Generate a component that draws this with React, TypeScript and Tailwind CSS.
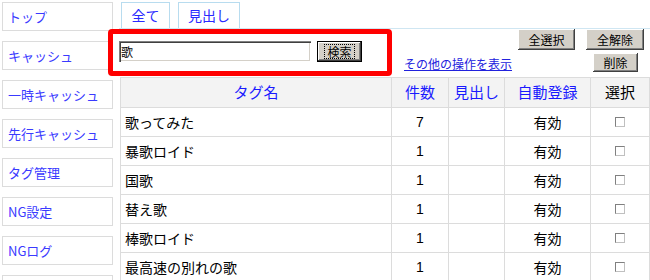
import React from "react";

const side = ["トップ", "キャッシュ", "一時キャッシュ", "先行キャッシュ", "タグ管理", "NG設定", "NGログ", ""];
const rows = [
  ["歌ってみた", "7"],
  ["暴歌ロイド", "1"],
  ["国歌", "1"],
  ["替え歌", "1"],
  ["棒歌ロイド", "1"],
  ["最高速の別れの歌", "1"],
];

const font = { fontFamily: '"Noto Sans CJK JP", "Liberation Sans", sans-serif' };

function WinButton({ children, className = "" }: { children: React.ReactNode; className?: string }) {
  return (
    <div
      className={
        "flex items-center justify-center bg-[#d4d0c8] text-[12px] leading-none text-black shadow-[inset_-1px_-1px_#404040,inset_1px_1px_#ffffff,inset_-2px_-2px_#808080] " +
        className
      }
    >
      {children}
    </div>
  );
}

export default function App() {
  return (
    <div className="relative h-[280px] w-[650px] overflow-hidden bg-white" style={font}>
      <div className="flex pl-[2px] pt-[2px]">
        <div className="flex w-[111px] flex-col gap-[10px]">
          {side.map((s, i) => (
            <div
              key={i}
              className="flex h-[29px] items-center border border-[#dcdcdc] pl-[5px] text-[13px] text-[#3a3aff]"
            >
              {s}
            </div>
          ))}
        </div>
        <div className="ml-[6px] flex w-[531px] flex-col">
          <div className="flex h-[27px] gap-[8px] border-b border-[#cfe6f2] pl-[2px]">
            <div className="flex h-[26px] w-[49px] items-center justify-center border border-b-0 border-[#b8dcef] text-[14px] text-[#2a2aff]">
              全て
            </div>
            <div className="flex h-[26px] w-[62px] items-center justify-center border border-b-0 border-[#b8dcef] text-[14px] text-[#2a2aff]">
              見出し
            </div>
          </div>
          <div className="flex h-[48px] items-start">
            <div className="mt-[12px] flex h-[21px] w-[192px] items-center bg-white pl-[2px] text-[12px] text-black shadow-[inset_1px_1px_#808080,inset_2px_2px_#404040,inset_-1px_-1px_#ffffff,inset_-2px_-2px_#d4d0c8]">
              歌
            </div>
            <div className="ml-[6px] mt-[12px] flex h-[21px] w-[45px] items-center justify-center border border-black bg-[#d4d0c8] shadow-[inset_-1px_-1px_#404040,inset_1px_1px_#ffffff,inset_-2px_-2px_#808080]">
              <span className="border border-dotted border-black px-[2px] text-[12px] leading-[13px] text-black">検索</span>
            </div>
            <div className="ml-[42px] mt-[28px] text-[12px] leading-[14px] text-[#2222dd] underline">
              その他の操作を表示
            </div>
            <div className="ml-[6px] flex flex-col">
              <div className="flex gap-[11px]">
                <WinButton className="h-[21px] w-[57px]">全選択</WinButton>
                <WinButton className="h-[21px] w-[58px]">全解除</WinButton>
              </div>
              <div className="mt-[3px] flex">
                <WinButton className="ml-[75px] h-[19px] w-[45px]">削除</WinButton>
              </div>
            </div>
          </div>
          <table className="ml-[1px] w-[529px] table-fixed border-collapse">
            <colgroup>
              <col className="w-[271px]" />
              <col className="w-[57px]" />
              <col className="w-[56px]" />
              <col className="w-[86px]" />
              <col className="w-[59px]" />
            </colgroup>
            <thead>
              <tr className="h-[30px] bg-[#f3f3f3] text-[15px]">
                <th className="border border-[#dcdcdc] font-normal text-[#1a1aff]">タグ名</th>
                <th className="border border-[#dcdcdc] font-normal text-[#1a1aff]">件数</th>
                <th className="border border-[#dcdcdc] font-normal text-[#1a1aff]">見出し</th>
                <th className="border border-[#dcdcdc] font-normal text-[#1a1aff]">自動登録</th>
                <th className="border border-[#dcdcdc] font-normal text-black">選択</th>
              </tr>
            </thead>
            <tbody>
              {rows.map(([n, c], i) => (
                <tr key={i} className="h-[29px] text-[14px] text-black">
                  <td className="border border-[#dcdcdc] pl-[4px]">{n}</td>
                  <td className="border border-[#dcdcdc] text-center" style={{ fontFamily: '"Liberation Sans", sans-serif' }}>
                    {c}
                  </td>
                  <td className="border border-[#dcdcdc]"></td>
                  <td className="border border-[#dcdcdc] text-center">有効</td>
                  <td className="border border-[#dcdcdc]">
                    <div className="mx-auto h-[10px] w-[10px] border border-[#808080] border-r-[#c0c0c0] border-b-[#c0c0c0] bg-white"></div>
                  </td>
                </tr>
              ))}
            </tbody>
          </table>
        </div>
      </div>
      <div className="pointer-events-none absolute left-[108px] top-[29px] h-[47px] w-[284px] rounded-[4px] border-[5px] border-[#ff0000]"></div>
    </div>
  );
}
